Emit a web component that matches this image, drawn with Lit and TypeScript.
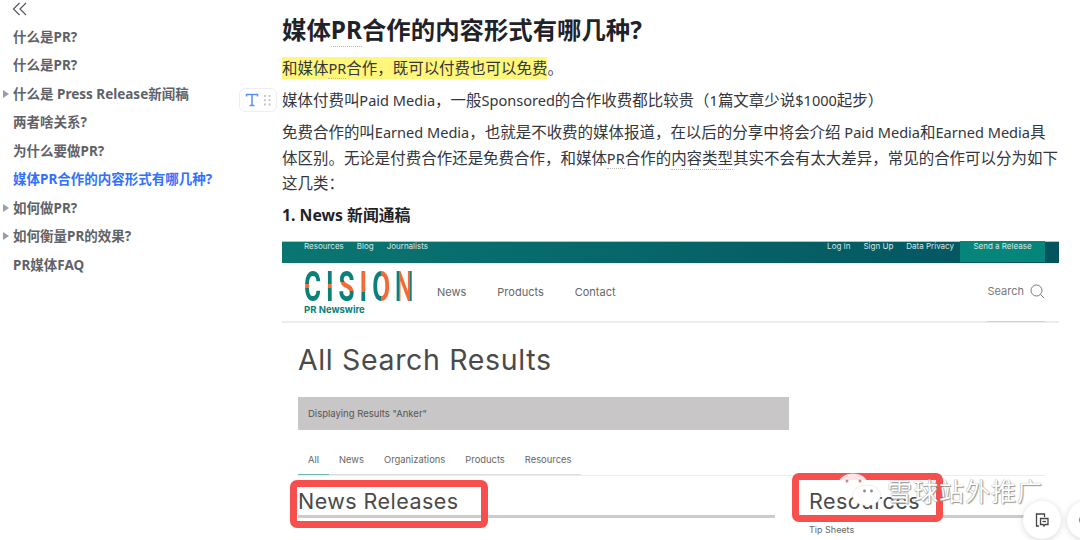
import { LitElement, html, css, svg } from "lit";
import { customElement } from "lit/decorators.js";

const outline = [
  { label: "什么是PR?" },
  { label: "什么是PR?" },
  { label: "什么是 Press Release新闻稿", caret: true },
  { label: "两者啥关系?" },
  { label: "为什么要做PR?" },
  { label: "媒体PR合作的内容形式有哪几种?", active: true },
  { label: "如何做PR?", caret: true },
  { label: "如何衡量PR的效果?", caret: true },
  { label: "PR媒体FAQ" },
];

const logoLetters = ["c", "i", "s", "i2", "o", "n"];
const logoText = "CISION";

// latin runs sit a bit smaller than the CJK around them
const mixed = (text: string) =>
  text
    .split(/([A-Za-z0-9$ ]+)/)
    .map((part, i) => (i % 2 ? html`<span class="en">${part}</span>` : part));

@customElement("app-root")
export class AppRoot extends LitElement {
  static styles = css`
    :host {
      display: block;
      width: 1080px;
      height: 540px;
      overflow: hidden;
      position: relative;
      background: #fff;
      font-family: "Noto Sans", "Noto Sans CJK SC", sans-serif;
    }
    .page {
      display: flex;
      height: 540px;
      overflow: hidden;
    }

    /* outline */
    .side {
      width: 282px;
      flex: none;
      padding: 1px 0 0 13px;
      box-sizing: border-box;
    }
    .collapse {
      display: block;
      width: 16px;
      height: 16px;
      margin-bottom: 5.5px;
      margin-left: -1px;
    }
    .item {
      position: relative;
      height: 28.5px;
      line-height: 28.5px;
      font-size: 13.5px;
      font-weight: 700;
      color: #5f6268;
      white-space: nowrap;
    }
    .item.active {
      color: #3370ff;
    }
    .caret {
      position: absolute;
      left: -10px;
      top: 10px;
      border-left: 6px solid #9a9da3;
      border-top: 4px solid transparent;
      border-bottom: 4px solid transparent;
    }

    /* article */
    .main {
      width: 777px;
      flex: none;
      color: #33363c;
    }
    h1 {
      margin: 12px 0 0;
      font-size: 24.4px;
      line-height: 36px;
      font-weight: 700;
      color: #1f2329;
      white-space: nowrap;
    }
    p {
      position: relative;
      margin: 0;
      font-size: 15.47px;
      line-height: 25.5px;
    }
    .en {
      font-size: 14.56px;
    }
    .first {
      margin-top: 8px;
    }
    .second,
    .third {
      margin-top: 6.5px;
    }
    mark {
      background: #fff67a;
      color: inherit;
    }
    .term {
      border-bottom: 1px dotted #bbb;
    }
    h4 {
      margin: 5px 0 13px;
      font-size: 15.8px;
      line-height: 26px;
      font-weight: 700;
      color: #1f2329;
    }
    .handle {
      position: absolute;
      left: -43px;
      top: 0;
      width: 38px;
      height: 24px;
      box-sizing: border-box;
      border: 1px solid #eceef1;
      border-radius: 6px;
      background: #fff;
      display: flex;
      align-items: center;
      justify-content: center;
      gap: 5px;
    }
    .handle svg {
      display: block;
    }

    /* embedded search results picture */
    .shot {
      position: relative;
      font-family: "Inter", "Noto Sans", sans-serif;
      color: #555;
    }
    .topbar {
      height: 22px;
      box-sizing: border-box;
      border-top: 1px solid #a9c7c5;
      background: linear-gradient(90deg, #0a7671, #03535f);
      display: flex;
      justify-content: space-between;
      padding-left: 22px;
      padding-right: 14px;
      font-size: 8px;
      line-height: 8px;
      color: #d6e8e6;
    }
    .links {
      display: flex;
      gap: 13px;
    }
    .send {
      width: 85px;
      margin-left: -7px;
      margin-top: -1px;
      height: 21px;
      padding-top: 1px;
      box-sizing: border-box;
      background: #06857b;
      text-align: center;
    }
    .head {
      position: relative;
      height: 60px;
      box-sizing: border-box;
      border-bottom: 2px solid #ececec;
      display: flex;
      align-items: center;
      padding: 2px 14px 0 22px;
    }
    .head::after {
      content: "";
      position: absolute;
      left: 705px;
      right: 14px;
      bottom: -1px;
      height: 1px;
      background: #cfcfcf;
    }
    .logo {
      width: 133px;
      flex: none;
      font-family: "Roboto", sans-serif;
    }
    .word {
      display: flex;
      gap: 8px;
      font-size: 42px;
      font-weight: 700;
      line-height: 32px;
      height: 32px;
      width: 177px;
      transform: scaleX(0.62);
      transform-origin: left center;
    }
    .word span {
      color: transparent;
      -webkit-background-clip: text;
      background-clip: text;
      background-image: linear-gradient(#0a8079, #0a8079);
    }
    .word .s {
      background-image: linear-gradient(
        #0a8079 35%,
        #f26a36 35%,
        #f26a36 62%,
        #0a8079 62%
      );
    }
    .word .c,
    .word .i {
      background-image: linear-gradient(
        #0a8079 40%,
        #f26a36 40%,
        #f26a36 54%,
        #0a8079 54%
      );
    }
    .word .i2 {
      background-image: linear-gradient(#f26a36 65%, #0a8079 65%);
    }
    .word .o {
      background-image: linear-gradient(90deg, #0a8079 50%, #f26a36 50%);
    }
    .word .n {
      background-image: linear-gradient(
        90deg,
        #0a8079 20%,
        #f26a36 20%,
        #f26a36 80%,
        #0a8079 80%
      );
    }
    .sub {
      font-size: 9.5px;
      line-height: 11px;
      font-weight: 700;
      color: #0a8079;
      margin-top: 1px;
      font-family: "Inter", sans-serif;
    }
    .nav {
      display: flex;
      gap: 31px;
      font-size: 11px;
      padding-bottom: 2px;
      color: #666;
    }
    .search {
      margin-left: auto;
      display: flex;
      align-items: center;
      gap: 6px;
      font-size: 11px;
      color: #777;
      padding-bottom: 3px;
    }
    .results {
      padding-left: 16px;
    }
    h2 {
      margin: 17px 0 17px;
      font-size: 28.5px;
      line-height: 40px;
      font-weight: 400;
      letter-spacing: 0.65px;
      color: #4a4a4a;
    }
    .display {
      width: 491px;
      height: 33px;
      box-sizing: border-box;
      background: #c8c6c6;
      padding-left: 10px;
      font-size: 9.5px;
      line-height: 33px;
      color: #555;
    }
    .tabline {
      width: 747px;
      margin-top: 16px;
      border-bottom: 1px solid #ececec;
    }
    .tabs {
      display: inline-flex;
      vertical-align: top;
      height: 29px;
      box-sizing: border-box;
      border-bottom: 1px solid #ddd;
      font-size: 9.4px;
      line-height: 28px;
      color: #666;
    }
    .tabs span {
      padding: 0 10px;
    }
    .tabs .on {
      border-bottom: 1px solid #6fb7b2;
      height: 29px;
      box-sizing: border-box;
    }
    .cols {
      display: flex;
      margin-top: 10px;
    }
    .col h3 {
      margin: 0;
      height: 32px;
      box-sizing: border-box;
      border-bottom: 3px solid #ccc;
      font-size: 21.5px;
      line-height: 30px;
      font-weight: 400;
      letter-spacing: 0.45px;
      color: #4a4a4a;
    }
    .col.left {
      width: 477px;
    }
    .col.rightcol {
      margin-left: 34px;
      width: 236px;
    }
    .tip {
      display: block;
      font-size: 9px;
      line-height: 14px;
      color: #666;
      margin-top: 5px;
    }
    .red {
      position: absolute;
      box-sizing: border-box;
      border: 7px solid #f74e4e;
      border-radius: 7px;
    }
    .red.one {
      left: 8px;
      top: 239px;
      width: 198px;
      height: 48px;
    }
    .red.two {
      left: 510px;
      top: 232px;
      width: 151px;
      height: 49px;
    }

    /* page overlays */
    .watermark {
      position: absolute;
      left: 838px;
      top: 473px;
      display: flex;
      align-items: flex-start;
      gap: 3px;
    }
    .watermark svg {
      display: block;
    }
    .watermark span {
      font-family: "Noto Sans CJK SC", sans-serif;
      font-size: 25px;
      line-height: 34px;
      letter-spacing: 1px;
      color: #fff;
      text-shadow: 0 0 1px #777, 1px 1px 1px #999;
    }
    .fab {
      position: absolute;
      top: 501px;
      width: 38px;
      height: 38px;
      box-sizing: border-box;
      border-radius: 50%;
      background: #fff;
      box-shadow: 0 1px 6px rgba(0, 0, 0, 0.16);
      display: flex;
      align-items: center;
      justify-content: center;
    }
    .fab.a {
      left: 1023px;
    }
    .fab.b {
      left: 1067px;
    }
  `;

  private renderHandle() {
    return html`<div class="handle">
      <svg width="14" height="14" viewBox="0 0 14 14" fill="none" stroke="#5b8ff9" stroke-width="1.5">
        <path d="M1.5 3.5V1.5H12.5V3.5M7 1.5V12.5M4.5 12.5H9.5" />
      </svg>
      <svg width="7" height="11" viewBox="0 0 7 11" fill="#c4c7cc">
        ${[0, 4.2, 8.4].map(
          (y) => svg`<rect x="0" y=${y} width="2" height="2" /><rect x="4.5" y=${y} width="2" height="2" />`
        )}
      </svg>
    </div>`;
  }

  private renderShot() {
    return html`<div class="shot">
      <div class="topbar">
        <div class="links"><span>Resources</span><span>Blog</span><span>Journalists</span></div>
        <div class="links">
          <span>Log In</span><span>Sign Up</span><span>Data Privacy</span>
          <span class="send">Send a Release</span>
        </div>
      </div>
      <div class="head">
        <div class="logo">
          <div class="word">
            ${logoLetters.map((c, i) => html`<span class=${c}>${logoText[i]}</span>`)}
          </div>
          <div class="sub">PR Newswire</div>
        </div>
        <div class="nav"><span>News</span><span>Products</span><span>Contact</span></div>
        <div class="search">
          Search
          <svg width="15" height="15" viewBox="0 0 15 15" fill="none" stroke="#777" stroke-width="1">
            <circle cx="6.5" cy="6.5" r="5.5" />
            <path d="M10.5 10.5L14.2 14.2" />
          </svg>
        </div>
      </div>
      <div class="results">
        <h2>All Search Results</h2>
        <div class="display">Displaying Results "Anker"</div>
        <div class="tabline">
          <div class="tabs">
            <span class="on">All</span><span>News</span><span>Organizations</span><span>Products</span><span>Resources</span>
          </div>
        </div>
        <div class="cols">
          <div class="col left"><h3>News Releases</h3></div>
          <div class="col rightcol">
            <h3>Resources</h3>
            <span class="tip">Tip Sheets</span>
          </div>
        </div>
      </div>
      <div class="red one"></div>
      <div class="red two"></div>
    </div>`;
  }

  render() {
    return html`
      <div class="page">
        <nav class="side">
          <svg class="collapse" viewBox="0 0 16 16" fill="none" stroke="#55585e" stroke-width="1.2">
            <path d="M7.5 2L1.5 8L7.5 14M14 2L8 8L14 14" />
          </svg>
          ${outline.map(
            (o) => html`<div class="item ${o.active ? "active" : ""}">
              ${o.caret ? html`<i class="caret"></i>` : ""}${o.label}
            </div>`
          )}
        </nav>
        <main class="main">
          <h1>媒体<span class="term">PR</span>合作的内容形式有哪几种?</h1>
          <p class="first"><mark>和媒体<span class="term en">PR</span>合作，既可以付费也可以免费</mark>。</p>
          <p class="second">${this.renderHandle()}${mixed("媒体付费叫Paid Media，一般Sponsored的合作收费都比较贵（1篇文章少说$1000起步）")}</p>
          <p class="third">
            ${mixed("免费合作的叫Earned Media，也就是不收费的媒体报道，在以后的分享中将会介绍 Paid Media和Earned Media具体区别。无论是付费合作还是免费合作，和媒体")}<span class="term en">PR</span>合作的<span class="term">内容类型</span>其实不会有太大差异，常见的合作可以分为如下这几类：
          </p>
          <h4>1. News 新闻通稿</h4>
          ${this.renderShot()}
        </main>
      </div>
      <div class="watermark">
        <svg width="46" height="34" viewBox="0 0 46 34">
          <path d="M15 0.500C7 0.500 0.500 5 0.500 11c0 3.500 2 6.400 5 8.400L4.500 23.500l4.700-2.400c1.800.5 3.700.8 5.800.8 8 0 14.500-4.700 14.500-10.900S23 0.500 15 0.500z" fill="#fff" fill-opacity="0.85" />
          <path d="M29 12c-8 0-14.500 4.600-14.500 10.300S21 32.500 29 32.500c1.500 0 3-.2 4.300-.5l4.500 2-1-3.400c3.600-1.900 5.700-4.900 5.700-8.300C42.500 16.600 37 12 29 12z" fill="#fff" stroke="#ddd" stroke-width="0.5" />
          <circle cx="9" cy="8" r="1.500" fill="#d98080" />
          <circle cx="22" cy="8" r="1.500" fill="#d98080" />
          <circle cx="26.500" cy="18" r="1.400" fill="#888" />
          <circle cx="33.500" cy="18" r="1.400" fill="#888" />
        </svg>
        <span>雪球站外推广</span>
      </div>
      <div class="fab a">
        <svg width="16" height="16" viewBox="0 0 16 16" fill="none" stroke="#444" stroke-width="1.3">
          <path d="M5 14H2.500V2H10.500V5" />
          <path d="M6.500 6.500H14V12.500H11L10 14L9 12.500H6.500Z" />
          <path d="M8.500 9.500H12" />
        </svg>
      </div>
      <div class="fab b">
        <svg width="16" height="16" viewBox="0 0 16 16" fill="none" stroke="#444" stroke-width="1.3">
          <circle cx="8" cy="8" r="6" />
        </svg>
      </div>
    `;
  }
}
